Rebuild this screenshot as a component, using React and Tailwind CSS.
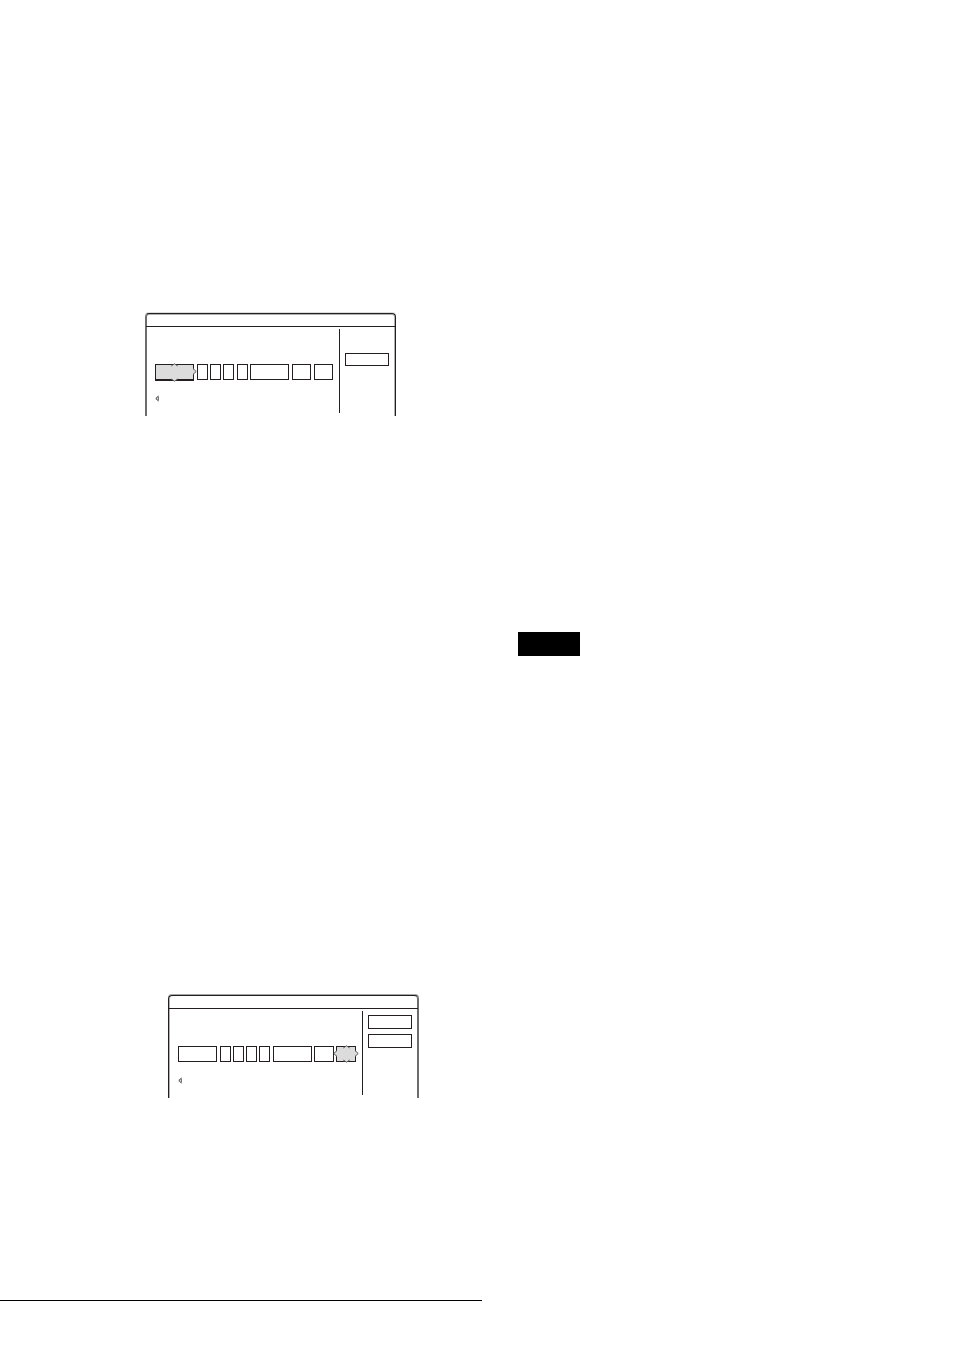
import clsx from 'clsx';

const timerFields = [
  { label: 'Date', size: 'w-[39px]', selected: true, arrows: ['up', 'down', 'right'] },
  { label: 'Start hour', size: 'ml-[3px] w-[11px]' },
  { label: 'Start minute', size: 'ml-0.5 w-[11px]' },
  { label: 'Stop hour', size: 'ml-0.5 w-[11px]' },
  { label: 'Stop minute', size: 'ml-[3px] w-[11px]' },
  { label: 'Channel', size: 'ml-0.5 w-[39px]' },
  { label: 'Mode', size: 'ml-[3px] w-[19px]' },
  { label: 'Option', size: 'ml-[3px] w-[19px]' },
];

const confirmFields = [
  { label: 'Date', size: 'w-[39px]' },
  { label: 'Start hour', size: 'ml-[3px] w-[11px]' },
  { label: 'Start minute', size: 'ml-0.5 w-[11px]' },
  { label: 'Stop hour', size: 'ml-0.5 w-[11px]' },
  { label: 'Stop minute', size: 'ml-0.5 w-[11px]' },
  { label: 'Channel', size: 'ml-[3px] w-[39px]' },
  { label: 'Mode', size: 'ml-0.5 w-5' },
  { label: 'Option', size: 'ml-0.5 w-5', selected: true, arrows: ['up', 'down', 'left', 'right'] },
];

const arrowShapes = {
  up: { width: 7, height: 4, d: 'M0.3 3 L3.5 0.8 L6.7 3', place: '-top-px inset-x-0 mx-auto' },
  down: { width: 7, height: 4, d: 'M0.3 1 L3.5 3.2 L6.7 1', place: '-bottom-px inset-x-0 mx-auto' },
  left: { width: 5, height: 7, d: 'M4 0.5 L0.8 3.5 L4 6.5', place: '-left-[3px] top-1' },
  right: { width: 5, height: 7, d: 'M1 0.5 L4.2 3.5 L1 6.5', place: '-right-[3px] top-1' },
};

function Arrow({ direction }) {
  const { width, height, d, place } = arrowShapes[direction];
  return (
    <svg className={clsx('pointer-events-none absolute', place)} width={width} height={height} aria-hidden="true">
      <path d={d} fill="#dcdcdc" stroke="#555" strokeWidth="1" />
    </svg>
  );
}

function Field({ label, size, selected, thick, arrows = [] }) {
  return (
    <div className={clsx('relative shrink-0', size)}>
      <input
        type="text"
        aria-label={label}
        className={clsx(
          'block w-full border border-[#231f20] outline-none',
          selected ? 'bg-[#dcdcdc]' : 'bg-white',
          selected && thick ? 'h-[17px] border-b-2' : 'h-4'
        )}
      />
      {arrows.map((direction) => (
        <Arrow key={direction} direction={direction} />
      ))}
    </div>
  );
}

function TimerPanel({ fields, thick, className, children }) {
  return (
    <section className={clsx('w-full max-w-[251px] rounded-t border border-b-0 border-[#231f20]', className)}>
      {/* title bar */}
      <header className="h-[13px] border-b border-[#231f20]" />
      <div className="flex h-[89px] pt-0.5 pb-[3px]">
        <div className="w-[193px] pt-[35px] pl-[9px]">
          <div className="flex h-[17px] items-start">
            {fields.map((field) => (
              <Field key={field.label} thick={thick} {...field} />
            ))}
          </div>
          {/* hint mark under the row */}
          <svg className="mt-[14px]" width="5" height="7" aria-hidden="true">
            <path d="M3.5 1 L0.8 3.5 L3.5 6" fill="#ddd" stroke="#333" strokeWidth="1" />
            <path d="M3.5 1.5 V5.5" fill="none" stroke="#777" strokeWidth="1" />
          </svg>
        </div>
        <div className="flex flex-1 flex-col border-l border-[#231f20] pl-[5px]">{children}</div>
      </div>
    </section>
  );
}

export default function App() {
  return (
    <main className="grid min-h-screen grid-cols-[482fr_472fr] bg-white font-['Liberation_Sans',sans-serif]">
      <div className="pt-[313px] pb-12">
        <TimerPanel
          fields={timerFields}
          thick
          className="ml-[145px] border-l-[#6d6d6d] shadow-[inset_1px_0_#6d6d6d,inset_-1px_0_#b0b0b0,inset_0_1px_#b0b0b0,0_-1px_#dedede]"
        >
          <button type="button" aria-label="OK" className="mt-6 h-[13px] w-11 border border-[#231f20]" />
        </TimerPanel>

        <TimerPanel
          fields={confirmFields}
          className="mt-[579px] ml-[168px] border-r-[#6d6d6d] shadow-[inset_1px_0_#b0b0b0,inset_-1px_0_#6d6d6d,0_-1px_#a8a8a8]"
        >
          <button type="button" aria-label="OK" className="mt-1 h-[14px] w-11 border border-[#231f20]" />
          <button type="button" aria-label="Cancel" className="mt-[5px] h-[14px] w-11 border border-[#231f20]" />
        </TimerPanel>

        <hr className="mt-[202px] border-t border-black" />
      </div>

      <div className="pt-[632px] pl-9">
        <div className="h-6 w-[62px] bg-black" />
      </div>
    </main>
  );
}
